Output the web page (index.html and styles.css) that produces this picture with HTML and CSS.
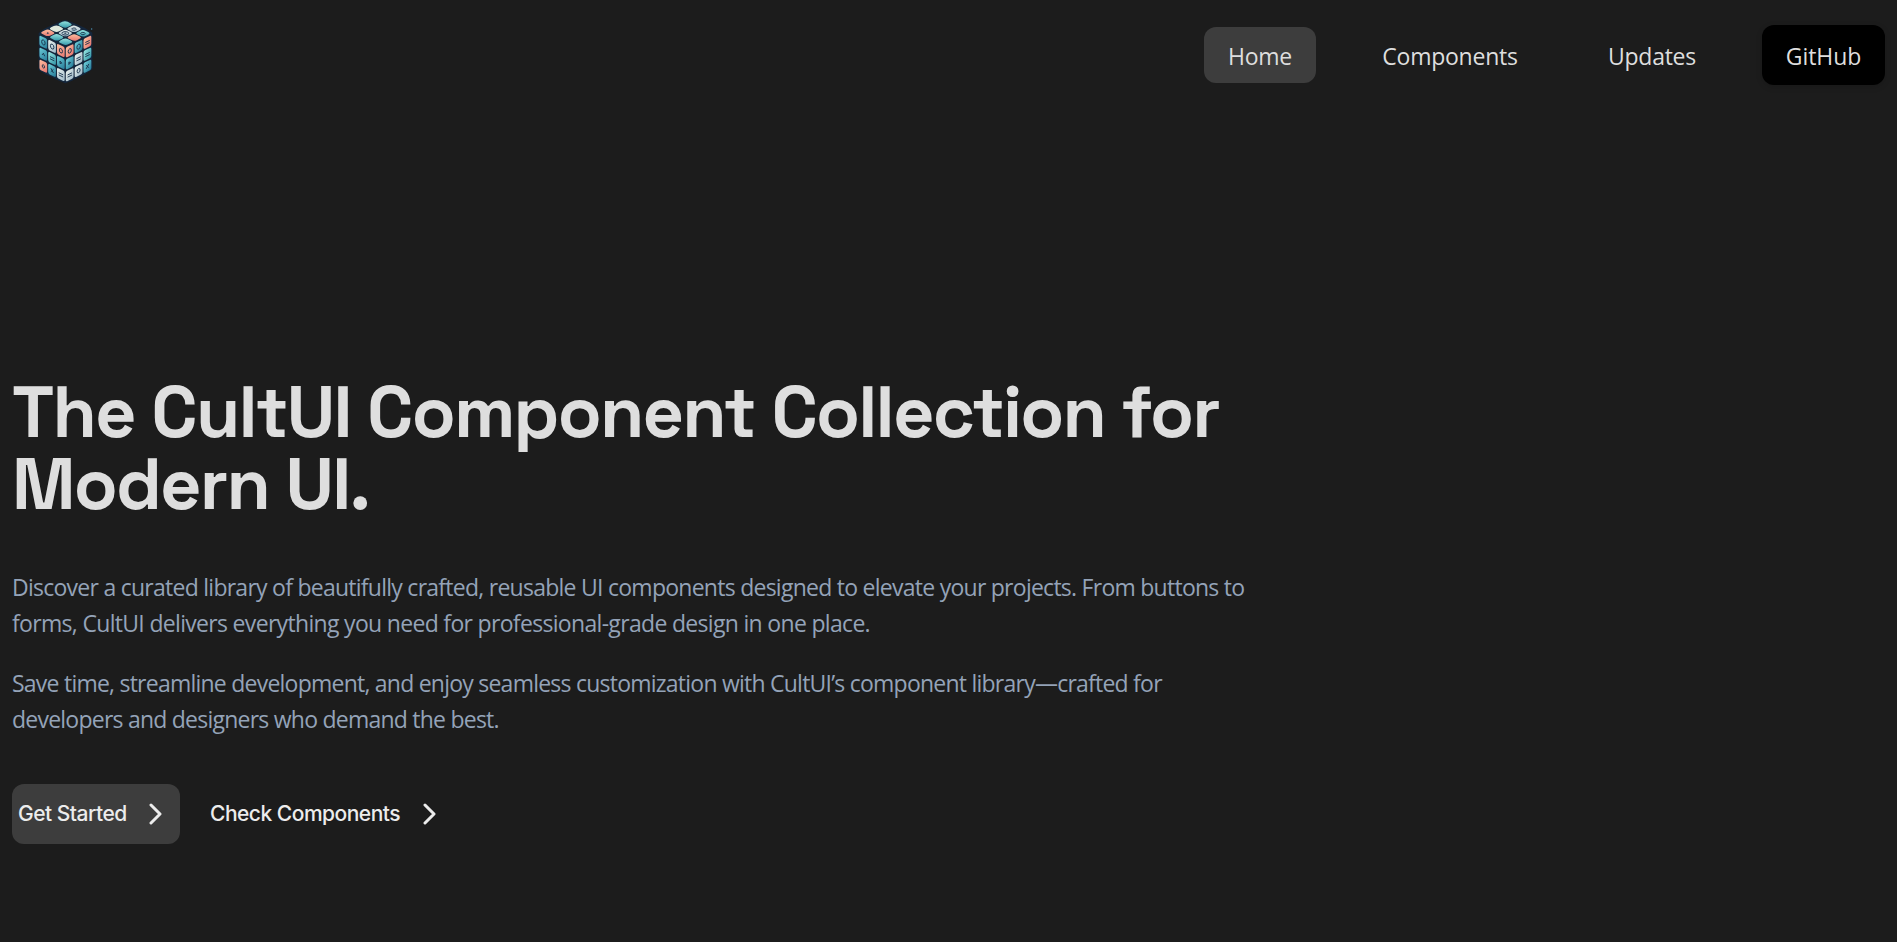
FILE: index.html
```html
<!DOCTYPE html>
<html lang="en">
<head>
<meta charset="utf-8">
<title>CultUI</title>
<link rel="stylesheet" href="styles.css">
</head>
<body>
<header class="navbar">
  <a class="logo" href="#" aria-label="CultUI">
    <svg viewBox="0 0 210 240" width="70" height="80">
      <defs>
        <linearGradient id="teal" x1="0" y1="0" x2="1" y2="1"><stop offset="0" stop-color="#9be8e2"/><stop offset="1" stop-color="#2f93a6"/></linearGradient>
        <linearGradient id="blue" x1="0" y1="0" x2="1" y2="1"><stop offset="0" stop-color="#6fd0da"/><stop offset="1" stop-color="#247896"/></linearGradient>
        <linearGradient id="pale" x1="0" y1="0" x2="1" y2="1"><stop offset="0" stop-color="#eaf2ee"/><stop offset="1" stop-color="#9db8c8"/></linearGradient>
        <linearGradient id="coral" x1="0" y1="0" x2="1" y2="1"><stop offset="0" stop-color="#ffc0a0"/><stop offset="1" stop-color="#e6746f"/></linearGradient>
      </defs>
      <path class="core" d="M105 29Q128 36 145 45Q170 54 187 68V178Q170 192 146 202Q126 214 106 220Q84 212 66 201Q42 192 26 180V70Q40 55 66 46Q84 36 105 29Z"/>
      <g transform="matrix(26.7 13.3 -26 12.7 105 31)">
        <rect class="teal" x=".02" y=".02" width=".9" height=".9" rx=".3"/>
        <rect class="pale" x="1.02" y=".02" width=".9" height=".9" rx=".3"/>
        <rect class="teal" x="2.02" y=".02" width=".9" height=".9" rx=".3"/>
        <rect class="cream" x=".02" y="1.02" width=".9" height=".9" rx=".3"/>
        <rect class="pale" x="1.02" y="1.02" width=".9" height=".9" rx=".3"/>
        <rect class="coral" x="2.02" y="1.02" width=".9" height=".9" rx=".3"/>
        <rect class="coral" x=".02" y="2.02" width=".9" height=".9" rx=".3"/>
        <rect class="teal" x="1.02" y="2.02" width=".9" height=".9" rx=".3"/>
        <rect class="teal" x="2.02" y="2.02" width=".9" height=".9" rx=".3"/>
        <g class="mark"><circle cx="1.5" cy=".5" r=".18"/><circle cx="2.5" cy=".5" r=".18"/><circle cx="1.5" cy="1.5" r=".28"/><circle cx="1.5" cy="1.5" r=".06"/><circle cx=".5" cy="2.5" r=".06"/></g>
      </g>
      <g transform="matrix(26.3 12.5 0 36 27 73)">
        <rect class="blue" x=".05" y=".06" width=".88" height=".86" rx=".16"/>
        <rect class="pale" x="1.05" y=".06" width=".88" height=".86" rx=".16"/>
        <rect class="coral" x="2.05" y=".06" width=".88" height=".86" rx=".16"/>
        <rect class="blue" x=".05" y="1.06" width=".88" height=".86" rx=".16"/>
        <rect class="teal" x="1.05" y="1.06" width=".88" height=".86" rx=".16"/>
        <rect class="blue" x="2.05" y="1.06" width=".88" height=".86" rx=".16"/>
        <rect class="coral" x=".05" y="2.06" width=".88" height=".86" rx=".16"/>
        <rect class="blue" x="1.05" y="2.06" width=".88" height=".86" rx=".16"/>
        <rect class="pale" x="2.05" y="2.06" width=".88" height=".86" rx=".16"/>
        <g class="mark"><circle cx=".5" cy=".5" r=".2"/><circle cx="1.5" cy=".5" r=".2"/><circle cx="2.5" cy=".5" r=".18"/><path d="M.35 1.6L.5 1.4L.65 1.6M1.25 1.42H1.75M1.25 1.6H1.75M2.4 1.4V1.6L2.6 1.5ZM1.35 2.35L1.65 2.65M1.65 2.35L1.35 2.65M2.25 2.42H2.75M2.25 2.6H2.75"/><circle cx=".5" cy="2.5" r=".13"/></g>
      </g>
      <g transform="matrix(26.6 -12.7 0 36 106 111)">
        <rect class="coral" x=".05" y=".06" width=".88" height=".86" rx=".16"/>
        <rect class="blue" x="1.05" y=".06" width=".88" height=".86" rx=".16"/>
        <rect class="coral" x="2.05" y=".06" width=".88" height=".86" rx=".16"/>
        <rect class="blue" x=".05" y="1.06" width=".88" height=".86" rx=".16"/>
        <rect class="pale" x="1.05" y="1.06" width=".88" height=".86" rx=".16"/>
        <rect class="teal" x="2.05" y="1.06" width=".88" height=".86" rx=".16"/>
        <rect class="pale" x=".05" y="2.06" width=".88" height=".86" rx=".16"/>
        <rect class="pale" x="1.05" y="2.06" width=".88" height=".86" rx=".16"/>
        <rect class="blue" x="2.05" y="2.06" width=".88" height=".86" rx=".16"/>
        <g class="mark"><circle cx=".5" cy=".5" r=".18"/><circle cx="1.5" cy=".5" r=".2"/><path d="M2.25 .42H2.75M2.25 .6H2.75M.4 1.4V1.6L.6 1.5ZM1.25 1.42H1.75M1.25 1.6H1.75M2.25 1.42H2.75M2.25 1.6H2.75M.25 2.42H.75M.25 2.6H.75M2.35 2.35L2.65 2.65M2.65 2.35L2.35 2.65"/><circle cx="1.5" cy="2.5" r=".17"/></g>
      </g>
      <circle class="spark" cx="185" cy="57" r="2.2"/>
    </svg>
  </a>
  <nav class="links">
    <a class="link home" href="#">Home</a>
    <a class="link components" href="#">Components</a>
    <a class="link updates" href="#">Updates</a>
    <a class="link github" href="#">GitHub</a>
  </nav>
</header>
<main class="hero">
  <h1 class="title">The CultUI Component Collection for<br>Modern UI.</h1>
  <div class="copy">
    <p>Discover a curated library of beautifully crafted, reusable UI components designed to elevate your projects. From buttons to<br><span class="looser">forms, CultUI delivers everything you need for professional-grade design in one place.</span></p>
    <p class="tighter">Save time, streamline development, and enjoy seamless customization with CultUI’s component library—crafted for<br>developers and designers who demand the best.</p>
  </div>
  <div class="actions">
    <a class="btn primary" href="#"><span>Get Started</span><svg class="chev" viewBox="0 0 14 22" width="14" height="22"><path d="M2 2L11 11L2 20"/></svg></a>
    <a class="btn" href="#"><span>Check Components</span><svg class="chev" viewBox="0 0 14 22" width="14" height="22"><path d="M2 2L11 11L2 20"/></svg></a>
  </div>
</main>
</body>
</html>
```
FILE: styles.css
```css
* { box-sizing: border-box; }
body { margin: 0; min-height: 942px; background: #1c1c1c; color: #dedede; font-family: "Segoe UI", "Open Sans", "Noto Sans", sans-serif; overflow: hidden; }
a { color: inherit; text-decoration: none; }
.navbar { display: flex; justify-content: space-between; align-items: flex-start; height: 110px; padding: 10px 12px 0 30px; }
.logo svg { display: block; }
.core { fill: #14263c; }
.teal { fill: url(#teal); }
.blue { fill: url(#blue); }
.pale { fill: url(#pale); }
.cream { fill: #dfe9dc; }
.coral { fill: url(#coral); }
.mark { fill: none; stroke: #17304a; stroke-width: .08; }
.spark { fill: #4b91b5; }
.links { display: flex; align-items: center; gap: 42px; height: 60px; margin-top: 15px; }
.link { display: flex; align-items: center; justify-content: center; height: 56px; padding-top: 2px; border-radius: 12px; font-size: 23px; line-height: 36px; letter-spacing: -.25px; white-space: nowrap; }
.home { width: 112px; background: #3d3d3d; }
.components { width: 184px; }
.updates { width: 136px; }
.github { width: 123px; height: 60px; background: #000; box-shadow: 0 2px 6px rgba(0, 0, 0, .15); letter-spacing: -.1px; }
.hero { padding: 266px 12px 0; }
.title { margin: 0; font-family: "Space Grotesk", Inter, sans-serif; font-size: 72px; font-weight: 700; line-height: 72px; letter-spacing: -1.8px; white-space: nowrap; }
.copy { margin-top: 49px; color: #94a3b8; font-size: 23px; line-height: 36px; letter-spacing: -.74px; white-space: nowrap; }
.copy p { margin: 0 0 24px; }
.looser { letter-spacing: -.68px; }
.tighter { letter-spacing: -.765px; }
.actions { display: flex; gap: 24px; margin-top: 47px; }
.btn { display: flex; align-items: center; justify-content: space-between; height: 60px; width: 168px; padding: 0 17px 0 6px; border-radius: 12px; color: #ececec; font-family: Inter, sans-serif; font-size: 21px; font-weight: 500; letter-spacing: -.5px; white-space: nowrap; }
.btn span { padding-bottom: 2px; }
.btn.primary { background: #3d3d3d; }
.btn + .btn { width: 250px; padding-left: 6px; }
.chev { fill: none; stroke: #ececec; stroke-width: 3; stroke-linecap: round; stroke-linejoin: round; }
```
